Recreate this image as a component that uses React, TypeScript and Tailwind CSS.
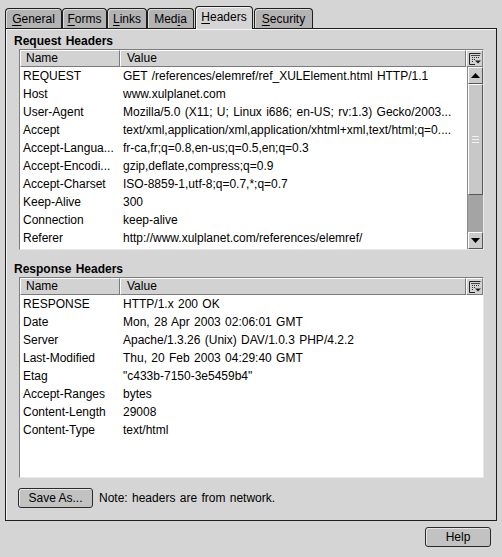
import React from "react";

const reqRows: [string, string][] = [
  ["REQUEST", "GET /references/elemref/ref_XULElement.html HTTP/1.1"],
  ["Host", "www.xulplanet.com"],
  ["User-Agent", "Mozilla/5.0 (X11; U; Linux i686; en-US; rv:1.3) Gecko/2003..."],
  ["Accept", "text/xml,application/xml,application/xhtml+xml,text/html;q=0...."],
  ["Accept-Langua...", "fr-ca,fr;q=0.8,en-us;q=0.5,en;q=0.3"],
  ["Accept-Encodi...", "gzip,deflate,compress;q=0.9"],
  ["Accept-Charset", "ISO-8859-1,utf-8;q=0.7,*;q=0.7"],
  ["Keep-Alive", "300"],
  ["Connection", "keep-alive"],
  ["Referer", "http://www.xulplanet.com/references/elemref/"],
];

const resRows: [string, string][] = [
  ["RESPONSE", "HTTP/1.x 200 OK"],
  ["Date", "Mon, 28 Apr 2003 02:06:01 GMT"],
  ["Server", "Apache/1.3.26 (Unix) DAV/1.0.3 PHP/4.2.2"],
  ["Last-Modified", "Thu, 20 Feb 2003 04:29:40 GMT"],
  ["Etag", "\"c433b-7150-3e5459b4\""],
  ["Accept-Ranges", "bytes"],
  ["Content-Length", "29008"],
  ["Content-Type", "text/html"],
];

function PickerIcon() {
  return (
    <svg width="12" height="12" viewBox="0 0 12 12">
      <path d="M0.5 0.5H11.5M0.5 0.5V11.5M0.5 11.5H6" stroke="#222" strokeWidth="1" fill="none" />
      <rect x="2" y="2" width="9" height="1" fill="#444" />
      <rect x="3" y="4" width="1" height="1" fill="#333" />
      <rect x="5" y="4" width="1" height="1" fill="#333" />
      <rect x="7" y="4" width="1" height="1" fill="#333" />
      <rect x="9" y="4" width="1" height="1" fill="#333" />
      <rect x="3" y="6" width="1" height="1" fill="#333" />
      <rect x="5" y="6" width="1" height="1" fill="#333" />
      <rect x="3" y="8" width="1" height="1" fill="#333" />
      <path d="M6 7.5H12L9 10.5Z" fill="#222" />
    </svg>
  );
}

function HeaderRow() {
  return (
    <div className="flex h-[17px] shrink-0">
      <div className="w-[100px] bg-[#d2d2d2] border-t border-l border-white border-r border-b border-r-[#7a7a7a] border-b-[#7a7a7a] pl-[5px] leading-[15px]">
        Name
      </div>
      <div className="flex-1 bg-[#d2d2d2] border-t border-l border-white border-r border-b border-r-[#7a7a7a] border-b-[#7a7a7a] pl-[6px] leading-[15px]">
        Value
      </div>
      <div className="w-[17px] bg-[#d2d2d2] border-t border-l border-white border-r border-b border-r-[#7a7a7a] border-b-[#7a7a7a] flex items-center justify-center">
        <PickerIcon />
      </div>
    </div>
  );
}

function Rows({ rows }: { rows: [string, string][] }) {
  return (
    <div className="flex-1 min-w-0">
      {rows.map(([n, v]) => (
        <div key={n} className="flex h-[18px] leading-[18px] whitespace-nowrap">
          <div className="w-[100px] pl-[3px] overflow-hidden">{n}</div>
          <div className="flex-1 pl-[3px] overflow-hidden">{v}</div>
        </div>
      ))}
    </div>
  );
}

function Arrow({ up }: { up: boolean }) {
  return (
    <svg width="9" height="5" viewBox="0 0 9 5">
      {up ? <path d="M0 5H9L4.5 0Z" fill="#000" /> : <path d="M0 0H9L4.5 5Z" fill="#000" />}
    </svg>
  );
}

function Scrollbar() {
  return (
    <div className="w-[16px] flex flex-col bg-[#a4a4a4] border-l border-[#8a8a8a]">
      <div className="h-[17px] bg-[#cbcbcb] border border-t-white border-l-white border-r-[#555] border-b-[#555] flex items-center justify-center">
        <Arrow up={true} />
      </div>
      <div className="h-[111px] bg-[#c8c8c8] border border-t-white border-l-white border-r-[#555] border-b-[#555] flex flex-col items-center justify-center gap-[2px]">
        <div className="w-[7px] h-[1px] bg-[#f0f0f0]" />
        <div className="w-[7px] h-[1px] bg-[#f0f0f0]" />
        <div className="w-[7px] h-[1px] bg-[#f0f0f0]" />
      </div>
      <div className="flex-1" />
      <div className="h-[17px] bg-[#cbcbcb] border border-t-white border-l-white border-r-[#555] border-b-[#555] flex items-center justify-center">
        <Arrow up={false} />
      </div>
    </div>
  );
}

function Tree({ rows, scroll }: { rows: [string, string][]; scroll: boolean }) {
  return (
    <div className="ml-[13px] mr-[12px] h-[201px] bg-white border border-t-[#7c7c7c] border-l-[#7c7c7c] border-r-[#e8e8e8] border-b-[#e8e8e8] flex flex-col">
      <HeaderRow />
      <div className="flex-1 flex min-h-0">
        <Rows rows={rows} />
        {scroll ? <Scrollbar /> : null}
      </div>
    </div>
  );
}

function Tab({ label, u, w, sel, ml }: { label: string; u: number; w: string; sel?: boolean; ml?: string }) {
  const before = label.slice(0, u);
  const ch = label.slice(u, u + 1);
  const after = label.slice(u + 1);
  return (
    <div
      className={
        sel
          ? `${w} ${ml ?? ""} h-[23px] -mb-px relative z-10 bg-[#d5d5d5] border border-b-0 border-[#1e1e1e] rounded-t-[4px] shadow-[inset_1px_1px_0_#f4f4f4] flex items-center justify-center pb-[2px]`
          : `${w} ${ml ?? ""} h-[20px] bg-[#b3b3b3] border border-b-0 border-[#1e1e1e] rounded-t-[4px] shadow-[inset_1px_1px_0_#dcdcdc] flex items-center justify-center`
      }
    >
      <span className="leading-[14px]">
        {before}
        <span className="underline underline-offset-2">{ch}</span>
        {after}
      </span>
    </div>
  );
}

export default function App() {
  return (
    <div
      className="w-[502px] h-[557px] bg-[#d5d5d5] text-black text-[12px] [word-spacing:1px] flex flex-col overflow-hidden"
      style={{ fontFamily: '"Liberation Sans", Arial, sans-serif' }}
    >
      <div className="h-[28px] flex items-end pl-[5px]">
        <Tab label="General" u={0} w="w-[57px]" />
        <Tab label="Forms" u={0} w="w-[45px]" />
        <Tab label="Links" u={0} w="w-[40px]" />
        <Tab label="Media" u={3} w="w-[47px]" />
        <Tab label="Headers" u={0} w="w-[58px]" ml="ml-[1px]" sel />
        <Tab label="Security" u={0} w="w-[59px]" ml="ml-[1px]" />
      </div>
      <div className="mx-[5px] h-[493px] border border-[#1e1e1e] shadow-[inset_1px_1px_0_#f4f4f4] flex flex-col">
        <div className="h-[20px] flex items-end pl-[8px] pb-[1px] font-bold leading-[14px]">Request Headers</div>
        <Tree rows={reqRows} scroll={true} />
        <div className="h-[27px] flex items-end pl-[8px] pb-[1px] font-bold leading-[14px]">Response Headers</div>
        <Tree rows={resRows} scroll={false} />
        <div className="flex items-center mt-[10px] ml-[12px] gap-[6px]">
          <button className="w-[75px] h-[20px] bg-[#c2c2c2] border border-[#2a2a2a] rounded-[3px] shadow-[inset_1px_1px_0_#e6e6e6] leading-[16px] text-[12px]">
            Save As...
          </button>
          <span>Note: headers are from network.</span>
        </div>
      </div>
      <div className="flex justify-end mt-[6px] pr-[11px]">
        <button className="w-[66px] h-[20px] bg-[#c2c2c2] border border-[#2a2a2a] rounded-[3px] shadow-[inset_1px_1px_0_#e6e6e6] leading-[16px] text-[12px]">
          Help
        </button>
      </div>
    </div>
  );
}
